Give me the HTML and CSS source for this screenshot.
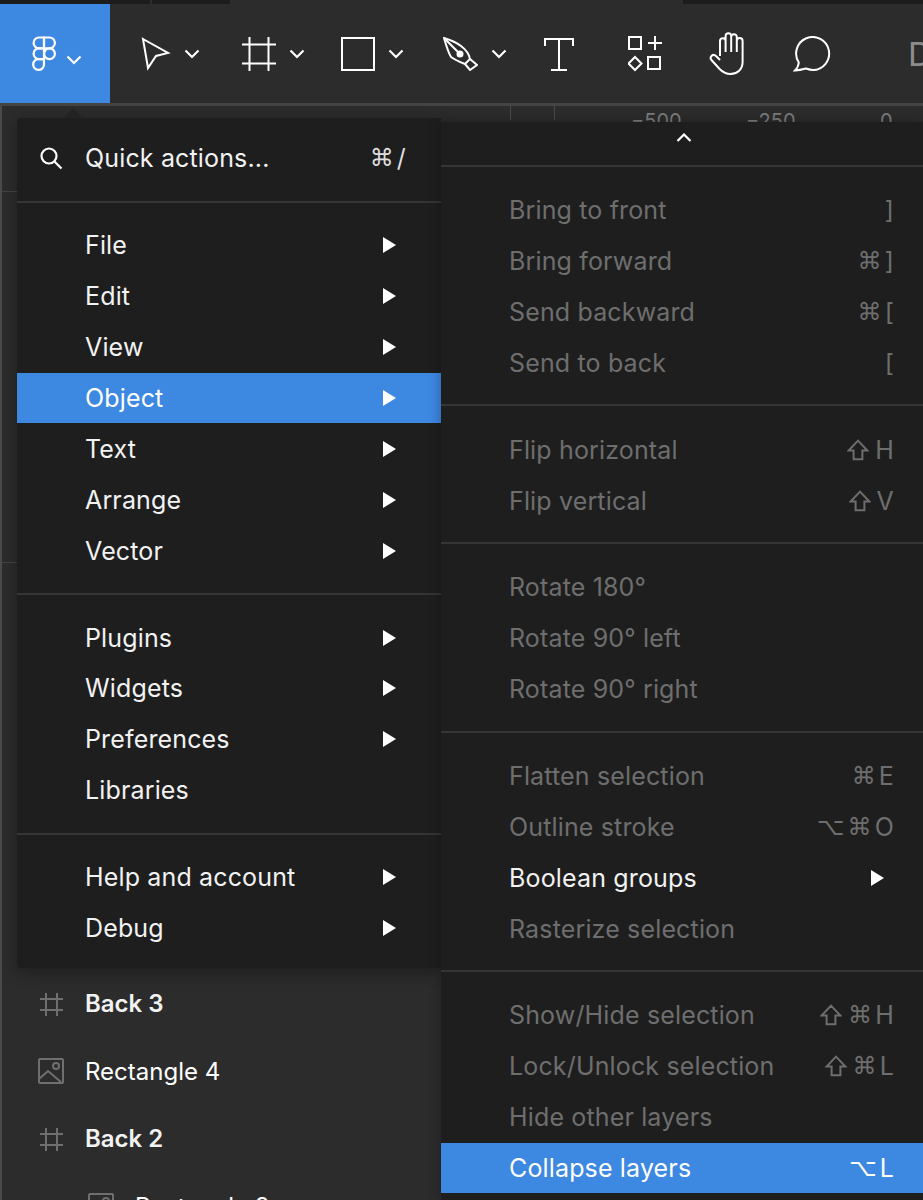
FILE: index.html
```html
<!DOCTYPE html>
<html lang="en">
<head>
    <meta charset="UTF-8">
    <title>Figma menu</title>
    <link rel="stylesheet" href="styles.css">
</head>
<body>
<div class="app">
    <svg class="defs" width="0" height="0">
        <symbol id="shift" viewBox="0 0 20 20"><path d="M10 1.500L18.500 10.500H14V18.500H6V10.500H1.500z"/></symbol>
    </svg>
    <div class="tabstrip">
        <div class="tab tab-a"></div>
        <div class="tab tab-b"></div>
        <div class="tab tab-c"></div>
    </div>
    <div class="toolbar">
        <div class="main-btn">
            <svg width="25" height="36" viewBox="0 0 25 36" fill="none" stroke="#fff" stroke-width="2.200">
                <path d="M12 1.500H7a5.400 5.400 0 0 0 0 10.800h5z"/>
                <path d="M12 1.500h5.500a5.400 5.400 0 0 1 0 10.800H12z"/>
                <path d="M12 12.300H7a5.400 5.400 0 0 0 0 10.800h5z"/>
                <circle cx="17.500" cy="17.700" r="5.400"/>
                <path d="M12 23.100H7a5.400 5.400 0 1 0 5 5.400z"/>
            </svg>
            <svg class="chev chev-main" width="16" height="10" viewBox="0 0 16 10"><path d="M1.500 1.500L8 8l6.500-6.500"/></svg>
        </div>
        <div class="tool tool-move">
            <svg width="30" height="34" viewBox="0 0 30 34" fill="none" stroke="#fff" stroke-width="2"><path d="M2 2l25 14-12 3-8 12z"/></svg>
            <svg class="chev" width="16" height="10" viewBox="0 0 16 10"><path d="M1.500 1.500L8 8l6.500-6.500"/></svg>
        </div>
        <div class="tool tool-frame">
            <svg width="34" height="34" viewBox="0 0 34 34" fill="none" stroke="#fff" stroke-width="2"><path d="M7.500 0v34M26.500 0v34M0 7.500h34M0 26.500h34"/></svg>
            <svg class="chev" width="16" height="10" viewBox="0 0 16 10"><path d="M1.500 1.500L8 8l6.500-6.500"/></svg>
        </div>
        <div class="tool tool-rect">
            <svg width="34" height="34" viewBox="0 0 34 34" fill="none" stroke="#fff" stroke-width="2"><rect x="1" y="1" width="32" height="32"/></svg>
            <svg class="chev" width="16" height="10" viewBox="0 0 16 10"><path d="M1.500 1.500L8 8l6.500-6.500"/></svg>
        </div>
        <div class="tool tool-pen">
            <svg width="35" height="34" viewBox="0 0 35 34" fill="none" stroke="#fff" stroke-width="2"><path d="M1 1C8 3 14 6 18 9c4 3 8 8 9 13l-5 5C17 25 12 23 8 20 5 15 3 8 1 1zM1 1l15 15M27 22l7 6-7 5-5-6"/><circle cx="17" cy="17" r="2.500" fill="#fff"/></svg>
            <svg class="chev" width="16" height="10" viewBox="0 0 16 10"><path d="M1.500 1.500L8 8l6.500-6.500"/></svg>
        </div>
        <div class="tool tool-text">
            <svg width="30" height="34" viewBox="0 0 30 34" fill="none" stroke="#fff" stroke-width="2"><path d="M1 9V2h28v7M15 2v31M7 33h16"/></svg>
        </div>
        <div class="tool tool-comps">
            <svg width="34" height="36" viewBox="0 0 34 36" fill="none" stroke="#fff" stroke-width="2"><rect x="1" y="1" width="12" height="12"/><path d="M20 7h14M27 0v14"/><path d="M7 21l6.500 6.500L7 34 .5 27.500z"/><rect x="20" y="21" width="12" height="12"/></svg>
        </div>
        <div class="tool tool-hand">
            <svg width="38" height="44" viewBox="0 0 38 44" fill="none" stroke="#fff" stroke-width="2"><path d="M11 24V9a2.800 2.800 0 0 1 5.600 0v11M16.600 20V4a2.800 2.800 0 0 1 5.600 0v16M22.200 20V5a2.800 2.800 0 0 1 5.600 0v15M27.800 20V9a2.900 2.900 0 0 1 5.800 0v21c0 8-6 12-12 12-5 0-8-2-11-5L2.500 28c-2.500-3 1.500-7 4.500-4l4 4"/></svg>
        </div>
        <div class="tool tool-comment">
            <svg width="38" height="36" viewBox="0 0 38 36" fill="none" stroke="#fff" stroke-width="2"><path d="M2 34.500c2-2 3.500-5 3.800-8A16.500 16.500 0 1 1 20 34c-3.500 0-5.500-1-7-1.500-3 .8-7 1.800-11 2z"/></svg>
        </div>
        <span class="tool-d">D</span>
    </div>
    <div class="workspace">
        <div class="layers">
            <div class="panel-line line-a"></div>
            <div class="panel-line line-b"></div>
            <div class="layer-list">
                <div class="layer layer-frame">
                    <svg class="layer-icon" width="26" height="26" viewBox="0 0 26 26" fill="none" stroke="#6f6f6f" stroke-width="2"><path d="M8 2v23M19 2v23M2 8h23M2 19h23"/></svg>
                    <span>Back 3</span>
                </div>
                <div class="layer">
                    <svg class="layer-icon" width="26" height="26" viewBox="0 0 26 26" fill="none" stroke="#6f6f6f" stroke-width="2"><rect x="1" y="1" width="24" height="24" rx="1"/><circle cx="18" cy="8" r="3"/><path d="M1 21l9-8 13 11"/></svg>
                    <span>Rectangle 4</span>
                </div>
                <div class="layer layer-frame">
                    <svg class="layer-icon" width="26" height="26" viewBox="0 0 26 26" fill="none" stroke="#6f6f6f" stroke-width="2"><path d="M8 2v23M19 2v23M2 8h23M2 19h23"/></svg>
                    <span>Back 2</span>
                </div>
                <div class="layer layer-child">
                    <svg class="layer-icon" width="26" height="26" viewBox="0 0 26 26" fill="none" stroke="#6f6f6f" stroke-width="2"><rect x="1" y="1" width="24" height="24" rx="1"/><circle cx="18" cy="8" r="3"/></svg>
                    <span>Rectangle 3</span>
                </div>
            </div>
        </div>
        <div class="canvas">
            <div class="ruler">
                <span class="tick tick-a"></span>
                <span class="tick tick-b"></span>
                <span class="ruler-num num-a">−500</span>
                <span class="ruler-num num-b">−250</span>
                <span class="ruler-num num-c">0</span>
            </div>
        </div>
    </div>

    <div class="menu main-menu">
        <div class="item">
            <svg class="search" width="24" height="24" viewBox="0 0 24 24" fill="none" stroke="#fff" stroke-width="2.200"><circle cx="10" cy="10" r="7.500"/><path d="M15.500 15.500l7 7"/></svg>
            <span class="label">Quick actions...</span>
            <span class="keys"><i>⌘</i>/</span>
        </div>
        <div class="sep"></div>
        <div class="item"><span class="label">File</span><b class="arrow"></b></div>
        <div class="item"><span class="label">Edit</span><b class="arrow"></b></div>
        <div class="item"><span class="label">View</span><b class="arrow"></b></div>
        <div class="item active"><span class="label">Object</span><b class="arrow"></b></div>
        <div class="item"><span class="label">Text</span><b class="arrow"></b></div>
        <div class="item"><span class="label">Arrange</span><b class="arrow"></b></div>
        <div class="item"><span class="label">Vector</span><b class="arrow"></b></div>
        <div class="sep"></div>
        <div class="item"><span class="label">Plugins</span><b class="arrow"></b></div>
        <div class="item"><span class="label">Widgets</span><b class="arrow"></b></div>
        <div class="item"><span class="label">Preferences</span><b class="arrow"></b></div>
        <div class="item"><span class="label">Libraries</span></div>
        <div class="sep"></div>
        <div class="item"><span class="label">Help and account</span><b class="arrow"></b></div>
        <div class="item"><span class="label">Debug</span><b class="arrow"></b></div>
    </div>

    <div class="menu sub-menu">
        <div class="scroll-up">
            <svg class="chev" width="16" height="10" viewBox="0 0 16 10"><path d="M1.500 8L8 1.500 14.500 8"/></svg>
        </div>
        <div class="sep"></div>
        <div class="item off"><span class="label">Bring to front</span><span class="keys">]</span></div>
        <div class="item off"><span class="label">Bring forward</span><span class="keys"><i>⌘</i>]</span></div>
        <div class="item off"><span class="label">Send backward</span><span class="keys"><i>⌘</i>[</span></div>
        <div class="item off"><span class="label">Send to back</span><span class="keys">[</span></div>
        <div class="sep"></div>
        <div class="item off"><span class="label">Flip horizontal</span><span class="keys"><svg class="shift"><use href="#shift"/></svg>H</span></div>
        <div class="item off"><span class="label">Flip vertical</span><span class="keys"><svg class="shift"><use href="#shift"/></svg>V</span></div>
        <div class="sep"></div>
        <div class="item off"><span class="label">Rotate 180°</span></div>
        <div class="item off"><span class="label">Rotate 90° left</span></div>
        <div class="item off"><span class="label">Rotate 90° right</span></div>
        <div class="sep"></div>
        <div class="item off"><span class="label">Flatten selection</span><span class="keys"><i>⌘</i>E</span></div>
        <div class="item off"><span class="label">Outline stroke</span><span class="keys"><i>⌥</i><i>⌘</i>O</span></div>
        <div class="item"><span class="label">Boolean groups</span><b class="arrow"></b></div>
        <div class="item off"><span class="label">Rasterize selection</span></div>
        <div class="sep"></div>
        <div class="item off"><span class="label">Show/Hide selection</span><span class="keys"><svg class="shift"><use href="#shift"/></svg><i>⌘</i>H</span></div>
        <div class="item off"><span class="label">Lock/Unlock selection</span><span class="keys"><svg class="shift"><use href="#shift"/></svg><i>⌘</i>L</span></div>
        <div class="item off"><span class="label">Hide other layers</span></div>
        <div class="item active"><span class="label">Collapse layers</span><span class="keys"><i>⌥</i>L</span></div>
    </div>
</div>
</body>
</html>
```

FILE: styles.css
```css
* {
    box-sizing: border-box;
}
body {
    margin: 0;
    background: #2c2c2c;
    font-family: Inter, "Liberation Sans", sans-serif;
}
.app {
    position: relative;
    width: 923px;
    height: 1200px;
    overflow: hidden;
    background: #2c2c2c;
    display: flex;
    flex-direction: column;
}
.defs {
    position: absolute;
}

/* top bar */
.tabstrip {
    display: flex;
    height: 4px;
    flex-shrink: 0;
}
.tab {
    background: #1c1c1c;
}
.tab-a {
    width: 150px;
    margin-right: 2px;
}
.tab-b {
    width: 78px;
    margin-right: 453px;
}
.tab-c {
    flex: 1;
}
.toolbar {
    display: flex;
    align-items: center;
    height: 99px;
    flex-shrink: 0;
    background: #2c2c2c;
    overflow: hidden;
}
.main-btn {
    width: 110px;
    height: 99px;
    flex-shrink: 0;
    padding-left: 32px;
    display: flex;
    align-items: center;
    background: #3d88e0;
}
.chev {
    fill: none;
    stroke: #fff;
    stroke-width: 2.200;
}
.chev-main {
    margin: 12px 0 0 9px;
}
.tool {
    display: flex;
    align-items: center;
    gap: 13px;
    flex-shrink: 0;
}
.tool-move { margin-left: 31px; width: 101px; }
.tool-frame { width: 99px; }
.tool-rect { width: 102px; }
.tool-pen { width: 101px; }
.tool-text { width: 84px; }
.tool-comps { width: 81px; }
.tool-hand { width: 84px; }
.tool-comment { width: 115px; }
.tool-d {
    font-size: 33px;
    color: #8c8c8c;
}

/* lower part */
.workspace {
    flex: 1;
    display: flex;
    border-top: 3px solid #444;
    min-height: 0;
}
.layers {
    width: 441px;
    flex-shrink: 0;
    border-left: 2px solid #4a4a4a;
}
.panel-line {
    height: 1px;
    background: #444;
}
.line-a {
    margin-top: 85px;
}
.line-b {
    margin-top: 370px;
}
.layer-list {
    padding-top: 407px;
}
.layer {
    height: 67.5px;
    display: flex;
    align-items: center;
    gap: 21px;
    padding-left: 36px;
    font-size: 24px;
    font-weight: 400;
    color: #fff;
}
.layer-frame {
    font-weight: 600;
    color: #f2f2f2;
}
.layer-child {
    padding-left: 86px;
}
.canvas {
    flex: 1;
    background: #2c2c2c;
}
.ruler {
    position: relative;
    height: 14px;
}
.tick {
    position: absolute;
    top: 0;
    width: 1px;
    height: 14px;
    background: #4a4a4a;
}
.tick-a { left: 69px; }
.tick-b { left: 113px; }
.ruler-num {
    position: absolute;
    top: 3px;
    font-size: 20px;
    color: #7d7d7d;
}
.num-a { left: 190px; }
.num-b { left: 305px; }
.num-c { left: 439px; }

/* menus */
.menu {
    position: absolute;
    background: #1e1e1e;
    color: #f2f2f2;
    font-size: 25px;
    letter-spacing: 0.15px;
}
.main-menu {
    left: 17px;
    top: 118px;
    width: 424px;
    padding: 15px 0;
    border-radius: 4px 0 0 4px;
    box-shadow: 0 4px 16px rgba(0, 0, 0, 0.35);
}
.main-menu::before {
    content: "";
    position: absolute;
    left: 46px;
    top: -10px;
    border: 10px solid transparent;
    border-top: 0;
    border-bottom-color: #232323;
}
.sub-menu {
    left: 441px;
    top: 122px;
    width: 482px;
    height: 1078px;
    background: #1e1e1e;
    box-shadow: 0 0 12px rgba(0, 0, 0, 0.3);
}
.item {
    position: relative;
    height: 50.900px;
    display: flex;
    align-items: center;
    padding: 0 28px 0 68px;
}
.sub-menu .item {
    height: 50.850px;
    padding: 0 29px 0 68px;
}
.label {
    flex: 1;
}
.item.off {
    color: #6e6e6e;
}
.item.active {
    background: #3d88e0;
    color: #fff;
}
.search {
    position: absolute;
    left: 22px;
    top: 13px;
}
.keys {
    display: flex;
    align-items: center;
    gap: 3px;
    font-size: 25px;
    line-height: 30px;
    white-space: nowrap;
    color: #ddd;
}
.item.off .keys {
    color: #6e6e6e;
}
.item.active .keys {
    color: #fff;
}
.keys i {
    font-family: "DejaVu Sans", sans-serif;
    font-style: normal;
    font-size: 24px;
    line-height: 30px;
}
.main-menu .keys {
    margin-right: 7px;
}
.shift {
    width: 22px;
    height: 22px;
    margin-right: 3px;
    fill: none;
    stroke: #6e6e6e;
    stroke-width: 1.800;
}
.arrow {
    width: 0;
    height: 0;
    margin-right: 17px;
    border-left: 13px solid #fff;
    border-top: 8px solid transparent;
    border-bottom: 8px solid transparent;
}
.sub-menu .arrow {
    margin-right: 10px;
}
.sep {
    height: 2px;
    margin: 17px 0;
    background: #353535;
}
.sub-menu .sep {
    margin: 16px 0 18px;
}
.scroll-up {
    height: 43px;
    display: flex;
    justify-content: center;
    align-items: center;
    padding: 0 0 12px 4px;
}
.sub-menu .scroll-up + .sep {
    margin: 0 0 18px;
}
```
